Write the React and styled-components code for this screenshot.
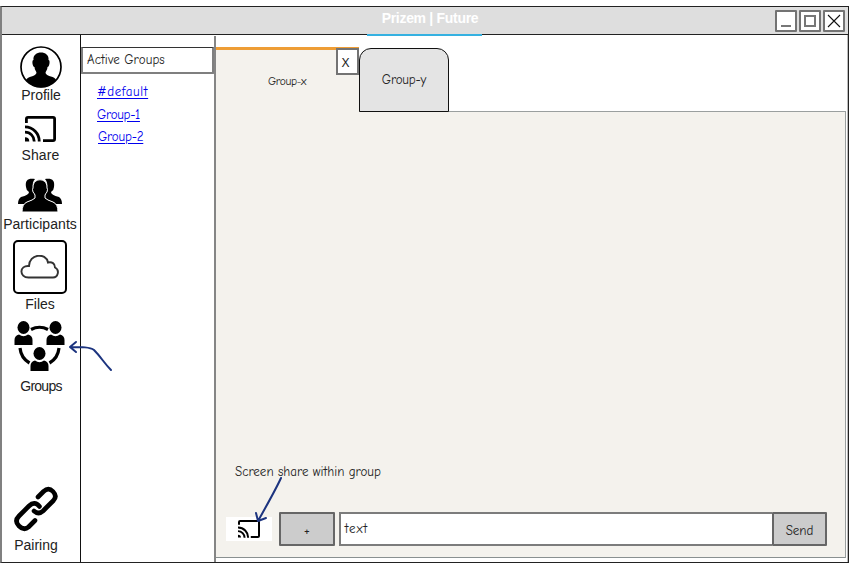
import React from "react";
import styled, { createGlobalStyle } from "styled-components";

const Global = createGlobalStyle`
  * { box-sizing: border-box; }
  html, body { margin: 0; padding: 0; background: #fff; overflow: hidden; }
  svg { display: block; flex: none; }
`;

const Window = styled.div`
  position: relative;
  width: 849px;
  height: 557px;
  margin-top: 6px;
  display: flex;
  flex-direction: column;
  background: #fff;
  border: 1px solid #222;
  border-left: 2px solid #808080;
  box-shadow: inset -1px 0 #bbb;
  color: #222;
  font-family: "Comic Sans MS", "Comic Neue", "Noto Sans", sans-serif;
`;

const TitleBar = styled.header`
  display: grid;
  grid-template-columns: 1fr 115px 1fr;
  height: 28px;
  flex: none;
  background: linear-gradient(#222, #222) bottom / 100% 1px no-repeat #dedede;
`;

const Title = styled.h1`
  grid-column: 2;
  margin: 0 0 0 -1px;
  width: 115px;
  height: 29px;
  border-bottom: 2px solid #35b1e1;
  color: #fff;
  font: bold 14px/23px "Liberation Sans", sans-serif;
  letter-spacing: -0.3px;
  text-align: center;
  white-space: nowrap;
  padding-left: 12px;
`;

const WindowControls = styled.div`
  grid-column: 3;
  display: flex;
  justify-content: flex-end;
  gap: 2px;
  padding: 3px 3px 0 0;
`;

const WindowButton = styled.button`
  width: 22px;
  height: 22px;
  padding: 0;
  border: 2px solid #737373;
  border-radius: 1px;
  background: #fff;
  display: grid;
  place-items: center;
`;

const Body = styled.div`
  display: flex;
  flex: 1;
  min-height: 0;
  padding-top: 1px;
`;

const Sidebar = styled.nav`
  width: 79px;
  margin-top: -1px;
  padding-top: 1px;
  display: flex;
  flex-direction: column;
  border-right: 1px solid #111;
`;

const NavItem = styled.div`
  height: ${(p) => p.$height}px;
  margin-top: ${(p) => (p.$last ? "auto" : 0)};
  margin-bottom: ${(p) => (p.$last ? 9 : 0)}px;
  padding-right: ${(p) => p.$shift || 0}px;
  display: flex;
  flex-direction: column;
  align-items: center;
  justify-content: flex-end;
  & > :first-child { margin-bottom: ${(p) => p.$gap}px; }
`;

const NavLabel = styled.span`
  font: 14px/16px "Liberation Sans", sans-serif;
  letter-spacing: ${(p) => p.$spacing || 0}px;
  padding-left: ${(p) => p.$offset || 0}px;
  white-space: nowrap;
`;

const FileTile = styled.div`
  width: 54px;
  height: 54px;
  flex: none;
  border: 2px solid #000;
  border-radius: 5px;
  display: grid;
  place-items: center;
`;

const GroupsPanel = styled.aside`
  width: 135px;
  padding: 11px 0 0;
  border-right: 2px solid #858585;
`;

const PanelHeading = styled.h2`
  width: 133px;
  height: 27px;
  margin: 0;
  padding-left: 4px;
  border: 2px solid #7f7f7f;
  border-top: 1px solid #333;
  border-radius: 1px;
  font-size: 13px;
  font-weight: 400;
  line-height: 24px;
  letter-spacing: 0.1px;
`;

const GroupList = styled.ul`
  margin: 7px 0 0 16px;
  padding: 0;
  list-style: none;
`;

const GroupItem = styled.li`
  height: 22.5px;
  padding-left: ${(p) => (p.$indent ? 1 : 0)}px;
  font-size: 13px;
  line-height: 22px;
  letter-spacing: ${(p) => p.$spacing || 0}px;
`;

const GroupLink = styled.a`
  color: #0000ee;
  text-decoration: underline;
  text-underline-offset: 2px;
`;

const Main = styled.main`
  width: 630px;
  display: flex;
  flex-direction: column;
  padding-top: 11px;
`;

const TabRow = styled.div`
  display: flex;
  align-items: flex-end;
  height: 65px;
  flex: none;
  background: linear-gradient(#9a9f9f, #9a9f9f) bottom / 100% 1px no-repeat;
`;

const ActiveTab = styled.div`
  width: 143px;
  height: 65px;
  display: flex;
  justify-content: flex-end;
  background: #f4f2ed;
  border-top: 3px solid #ee9d35;
`;

const ActiveTabLabel = styled.span`
  flex: 1;
  padding: 24px 0 0 52px;
  font-size: 11.5px;
  line-height: 15px;
  letter-spacing: -0.4px;
  white-space: nowrap;
`;

const TabClose = styled.button`
  width: 23px;
  height: 27px;
  margin: -2px 0 0;
  padding: 0 4px 0 0;
  border: 2px solid #737373;
  background: #fff;
  color: #222;
  font: 13px/20px "Noto Sans", sans-serif;
`;

const Tab = styled.div`
  width: 90px;
  height: 64px;
  border: 1px solid #111;
  border-radius: 12px 12px 0 0;
  background: #e4e4e4;
  font-size: 13px;
  line-height: 62px;
  letter-spacing: -0.2px;
  text-align: center;
`;

const Canvas = styled.section`
  display: flex;
  flex-direction: column;
  justify-content: flex-end;
  height: 446px;
  padding: 0 18px 11px 10px;
  background: #f4f2ed;
  border-right: 1px solid #9a9f9f;
  border-bottom: 1px solid #899090;
`;

const Caption = styled.p`
  margin: 0 0 32px 9px;
  font-size: 13px;
  line-height: 17px;
`;

const Composer = styled.form`
  display: flex;
  align-items: flex-start;
`;

const ShareButton = styled.div`
  width: 46px;
  height: 24px;
  margin: 5px 7px 0 0;
  display: grid;
  place-items: center;
  background: #fff;
`;

const GrayButton = styled.button`
  width: ${(p) => p.$width}px;
  height: 34px;
  padding: 2px 0 0;
  border: 2px solid #666;
  border-radius: 1px;
  background: #ccc;
  color: #222;
  font-family: inherit;
  font-size: ${(p) => p.$size}px;
`;

const MessageBox = styled.div`
  width: 434px;
  height: 34px;
  margin-left: 4px;
  padding-left: 4px;
  border: 2px solid #7c7c7c;
  border-right: 0;
  background: #fff;
  font-size: 13px;
  line-height: 30px;
  letter-spacing: 0.9px;
`;

const Arrow = styled.svg`
  position: absolute;
  left: ${(p) => p.$x}px;
  top: ${(p) => p.$y}px;
  fill: none;
  stroke: #1c347f;
  stroke-width: 2;
  stroke-linecap: round;
  stroke-linejoin: round;
`;

const ProfileIcon = () => (
  <svg width="42" height="42" viewBox="0 0 42 42">
    <circle cx="21" cy="21" r="20" fill="#fff" stroke="#000" strokeWidth="1.7" />
    <path d="M13.5 14C12 4 30 4 28.5 14C30.5 14 29.5 21 27.5 21C27.5 24 25.5 25 25.5 27C27 31 35 30 36 34Q30 41.5 21 41.5Q12 41.5 6 34C8 30 15 31 16.5 27C16.5 25 14.5 24 14.5 21C12.5 21 11.5 14 13.5 14Z" />
  </svg>
);

const CastIcon = ({ width, height }) => (
  <svg width={width} height={height} viewBox="0 0 31 26" preserveAspectRatio="none" fill="none" stroke="#000" strokeWidth="2.8">
    <path d="M1.4 7V3Q1.4 1.4 3 1.4H28Q29.6 1.4 29.6 3V23Q29.6 24.6 28 24.6H18" />
    <path d="M0 10.9A14.2 14.2 0 0 1 14.2 25.5M0 16.1A9.2 9.2 0 0 1 9.2 25.5" />
    <path d="M0 21.2V25.4H4.3A4.3 4.3 0 0 0 0 21.2Z" fill="#000" stroke="none" />
  </svg>
);

const PeopleIcon = () => (
  <svg width="44" height="35" viewBox="0 0 44 35">
    <path d="M8 9C7 2 10 0 17 1Q14 4 15 10Q14 12 17 17Q19 21 12 23Q8 24 7 26H0Q0 21 3 19Q11 17 11 14Q8 12 8 9Z" />
    <path d="M36 9C37 2 34 0 27 1Q30 4 29 10Q30 12 27 17Q25 21 32 23Q36 24 37 26H44Q44 21 41 19Q33 17 33 14Q36 12 36 9Z" />
    <path d="M15 10C14-1 30-1 29 10Q30 11 29 14Q28 15 27 17V20Q29 22 35 24Q40 26 40 34H4Q4 26 9 24Q15 22 17 20V17Q16 15 15 14Q14 11 15 10Z" stroke="#fff" strokeWidth="1" />
  </svg>
);

const CloudIcon = () => (
  <svg width="40" height="24" viewBox="0 0 40 24" fill="none" stroke="#333" strokeWidth="1.9">
    <path d="M8.5 22.5C-1 22.5-1 10 9 11C9-1 26-3 28 7.5C32 6.5 35 8.5 35 12.5C40 15 38 22.5 33 22.5Z" />
  </svg>
);

const Member = ({ x, y }) => (
  <g transform={`translate(${x} ${y})`}>
    <ellipse cx="9" cy="6.5" rx="6" ry="6.5" />
    <path d="M0 24V19Q0 14.5 4.5 13.5Q9 17 13.5 13.5Q18 14.5 18 19V24Z" />
  </g>
);

const GroupsIcon = () => (
  <svg width="51" height="50" viewBox="0 0 51 50">
    <path d="M17 8.5Q25.5 4 34 8.5M6 27Q7 37 15.5 42M45 27Q44 37 35.5 42" fill="none" stroke="#000" strokeWidth="3.2" />
    <Member x={0.5} y={0} />
    <Member x={32.5} y={0} />
    <Member x={16.5} y={26} />
  </svg>
);

const LinkIcon = () => (
  <svg width="45" height="46" viewBox="0 0 45 46" fill="none" stroke="#000" strokeWidth="4.6" strokeLinecap="round" strokeLinejoin="round">
    <path d="M24 11L29.5 5.5Q34.5 .8 39 5.5T39.5 14.5L29 25Q24.5 29 20 25" />
    <path d="M25.5 20.5Q20.5 14.5 15 20L5 30Q0 35 5 40T14.5 41L21 34.5" />
  </svg>
);

export default function App() {
  return (
    <>
      <Global />
      <Window>
        <TitleBar>
          <Title>Prizem | Future</Title>
          <WindowControls>
            <WindowButton aria-label="Minimize">
              <svg width="18" height="18" stroke="#777" strokeWidth="2"><path d="M4 14H14" /></svg>
            </WindowButton>
            <WindowButton aria-label="Maximize">
              <svg width="18" height="18" fill="none" stroke="#777" strokeWidth="2"><path d="M4 4H14V14H4Z" /></svg>
            </WindowButton>
            <WindowButton aria-label="Close">
              <svg width="18" height="18" stroke="#111" strokeWidth="1.1"><path d="M3 3L15 15M15 3L3 15" /></svg>
            </WindowButton>
          </WindowControls>
        </TitleBar>
        <Body>
          <Sidebar>
            <NavItem $height={67} $gap={-1}><ProfileIcon /><NavLabel>Profile</NavLabel></NavItem>
            <NavItem $height={60} $gap={5} $shift={1}><CastIcon width={31} height={26} /><NavLabel $spacing={0.15}>Share</NavLabel></NavItem>
            <NavItem $height={69} $gap={3} $shift={2}><PeopleIcon /><NavLabel $spacing={0.05}>Participants</NavLabel></NavItem>
            <NavItem $height={80} $gap={2} $shift={2}><FileTile><CloudIcon /></FileTile><NavLabel>Files</NavLabel></NavItem>
            <NavItem $height={82} $gap={7} $shift={3}><GroupsIcon /><NavLabel $spacing={-0.75} $offset={3}>Groups</NavLabel></NavItem>
            <NavItem $height={73} $gap={5} $shift={10} $last><LinkIcon /><NavLabel>Pairing</NavLabel></NavItem>
          </Sidebar>
          <GroupsPanel>
            <PanelHeading>Active Groups</PanelHeading>
            <GroupList>
              <GroupItem $spacing={0.6}><GroupLink href="#">#default</GroupLink></GroupItem>
              <GroupItem $spacing={-0.3}><GroupLink href="#">Group-1</GroupLink></GroupItem>
              <GroupItem $spacing={-0.2} $indent><GroupLink href="#">Group-2</GroupLink></GroupItem>
            </GroupList>
          </GroupsPanel>
          <Main>
            <TabRow>
              <ActiveTab>
                <ActiveTabLabel>Group-x</ActiveTabLabel>
                <TabClose>X</TabClose>
              </ActiveTab>
              <Tab>Group-y</Tab>
            </TabRow>
            <Canvas>
              <Caption>Screen share within group</Caption>
              <Composer>
                <ShareButton><CastIcon width={22} height={18} /></ShareButton>
                <GrayButton type="button" $width={56} $size={14}>+</GrayButton>
                <MessageBox>text</MessageBox>
                <GrayButton type="button" $width={55} $size={13}>Send</GrayButton>
              </Composer>
            </Canvas>
          </Main>
        </Body>
        <Arrow $x={64} $y={332} width="50" height="36">
          <path d="M4 8C16 8 24 8 28 11C35 18 38 24 45 31M10 3L4 8L10 13" />
        </Arrow>
        <Arrow $x={250} $y={467} width="36" height="52">
          <path d="M29 4C24 15 15 31 6 47M4 39L6 47L14 44" />
        </Arrow>
      </Window>
    </>
  );
}
